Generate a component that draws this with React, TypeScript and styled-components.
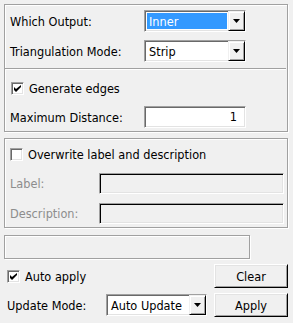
import React from "react";
import styled, { createGlobalStyle } from "styled-components";

const GlobalStyle = createGlobalStyle`
  html, body { margin: 0; padding: 0; background: #f0f0f0; }
  body {
    font-family: "DejaVu Sans Condensed", Tahoma, "DejaVu Sans", sans-serif;
    font-size: 12.6px;
    color: #000;
  }
`;

const Panel = styled.div`
  width: 293px;
  height: 323px;
  box-sizing: border-box;
  padding: 4px 5px 0 4px;
  display: flex;
  flex-direction: column;
`;

const GroupBox = styled.div<{ $pad: string; $gap?: number }>`
  border: 1px solid #a0a0a0;
  box-shadow: 1px 1px 0 #fff, inset 1px 1px 0 #fff;
  padding: ${p => p.$pad};
  margin-top: ${p => p.$gap || 0}px;
  display: flex;
  flex-direction: column;
`;

const FormRow = styled.div<{ $label: number; $top?: number; $h?: number }>`
  display: grid;
  grid-template-columns: ${p => p.$label}px auto;
  align-items: center;
  height: ${p => p.$h || 22}px;
  margin-top: ${p => p.$top || 0}px;
`;

const Label = styled.span<{ $disabled?: boolean }>`
  color: ${p => (p.$disabled ? "#8d8d8d" : "#000")};
  white-space: nowrap;
`;

const Separator = styled.div`
  height: 0;
  margin: 6px 1px 0 -5px;
  border-top: 1px solid #a0a0a0;
  border-bottom: 1px solid #fff;
`;

const CheckRow = styled.label<{ $h: number; $indent?: number }>`
  display: flex;
  align-items: center;
  gap: 5px;
  height: ${p => p.$h}px;
  padding-left: ${p => p.$indent || 0}px;
`;

const Box = styled.span`
  width: 13px;
  height: 13px;
  box-sizing: border-box;
  background: #fff;
  border: 1px solid;
  border-color: #a0a0a0 #fff #fff #a0a0a0;
  box-shadow: inset 1px 1px 0 #696969, inset -1px -1px 0 #e3e3e3;
  display: flex;
  align-items: center;
  justify-content: center;
  flex: none;
`;

const Sunken = styled.div<{ $w: number; $h: number; $bg?: string }>`
  width: ${p => p.$w}px;
  height: ${p => p.$h}px;
  box-sizing: border-box;
  background: ${p => p.$bg || "#fff"};
  border: 1px solid;
  border-color: #a0a0a0 #fff #fff #a0a0a0;
  box-shadow: inset 1px 1px 0 #696969, inset -1px -1px 0 #e3e3e3;
  display: flex;
  align-items: stretch;
  padding: 2px;
`;

const DisabledField = styled.div`
  width: 185px;
  height: 21px;
  box-sizing: border-box;
  background: #f0f0f0;
  border: 1px solid;
  border-color: #a0a0a0 #fff #fff #a0a0a0;
  box-shadow: inset 1px 1px 0 #000, inset -1px -1px 0 #e3e3e3;
`;

const ComboText = styled.span<{ $selected?: boolean }>`
  flex: 1;
  display: flex;
  align-items: center;
  padding-left: 2px;
  margin-right: 1px;
  background: ${p => (p.$selected ? "#3399ff" : "transparent")};
  color: ${p => (p.$selected ? "#fff" : "#000")};
  white-space: nowrap;
  overflow: hidden;
`;

const DropButton = styled.span`
  width: 17px;
  box-sizing: border-box;
  margin: -2px -2px -2px 0;
  background: #f0f0f0;
  border: 1px solid;
  border-color: #f0f0f0 #000 #000 #f0f0f0;
  box-shadow: inset 1px 1px 0 #fff, inset -1px -1px 0 #a0a0a0;
  display: flex;
  align-items: center;
  justify-content: center;
`;

const NumberText = styled.span`
  flex: 1;
  text-align: right;
  padding-right: 6px;
  line-height: 16px;
`;

const StatusBox = styled.div`
  width: 246px;
  height: 24px;
  box-sizing: border-box;
  margin-top: 7px;
  border: 1px solid #a0a0a0;
  box-shadow: inset 1px 1px 0 #fff, 1px 1px 0 #fff;
`;

const Footer = styled.div`
  margin-top: 5px;
  display: grid;
  grid-template-columns: 1fr 74px;
  grid-template-rows: 24px 24px;
  row-gap: 5px;
  align-items: center;
`;

const UpdateRow = styled.div`
  display: grid;
  grid-template-columns: 99px 101px;
  align-items: center;
  padding-left: 3px;
`;

const Button = styled.button`
  width: 74px;
  height: 24px;
  box-sizing: border-box;
  padding: 0;
  font: inherit;
  color: #000;
  background: #f0f0f0;
  border: 1px solid;
  border-color: #fff #000 #000 #fff;
  box-shadow: inset 1px 1px 0 #e3e3e3, inset -1px -1px 0 #a0a0a0;
`;

const Arrow = () => (
  <svg width="7" height="4" viewBox="0 0 7 4">
    <path d="M0 0h7L3.5 4z" fill="#000" />
  </svg>
);

const Check = () => (
  <svg width="7" height="7" viewBox="0 0 7 7">
    <path d="M0 2v3l2 2 5-5V-0L2 4z" fill="#000" />
  </svg>
);

const CheckBox = ({ checked, label, h, indent }: { checked: boolean; label: string; h: number; indent?: number }) => (
  <CheckRow $h={h} $indent={indent}>
    <Box>{checked && <Check />}</Box>
    <Label>{label}</Label>
  </CheckRow>
);

const Combo = ({ value, selected, w }: { value: string; selected?: boolean; w: number }) => (
  <Sunken $w={w} $h={22}>
    <ComboText $selected={selected}>{value}</ComboText>
    <DropButton>
      <Arrow />
    </DropButton>
  </Sunken>
);

export default function App() {
  return (
    <>
      <GlobalStyle />
      <Panel>
        <GroupBox $pad="5px 0 3px 5px">
          <FormRow $label={134}>
            <Label>Which Output:</Label>
            <Combo value="Inner" selected w={102} />
          </FormRow>
          <FormRow $label={134} $top={8}>
            <Label>Triangulation Mode:</Label>
            <Combo value="Strip" w={102} />
          </FormRow>
          <Separator />
          <CheckBox checked label="Generate edges" h={36} indent={1} />
          <FormRow $label={134}>
            <Label>Maximum Distance:</Label>
            <Sunken $w={102} $h={22}>
              <NumberText>1</NumberText>
            </Sunken>
          </FormRow>
        </GroupBox>

        <GroupBox $pad="0 3px 3px 5px" $gap={6}>
          <CheckBox checked={false} label="Overwrite label and description" h={30} />
          <FormRow $label={89} $top={4} $h={21}>
            <Label $disabled>Label:</Label>
            <DisabledField />
          </FormRow>
          <FormRow $label={89} $top={9} $h={21}>
            <Label $disabled>Description:</Label>
            <DisabledField />
          </FormRow>
        </GroupBox>

        <StatusBox />

        <Footer>
          <CheckBox checked label="Auto apply" h={24} indent={3} />
          <Button>Clear</Button>
          <UpdateRow>
            <Label>Update Mode:</Label>
            <Combo value="Auto Update" w={101} />
          </UpdateRow>
          <Button>Apply</Button>
        </Footer>
      </Panel>
    </>
  );
}
